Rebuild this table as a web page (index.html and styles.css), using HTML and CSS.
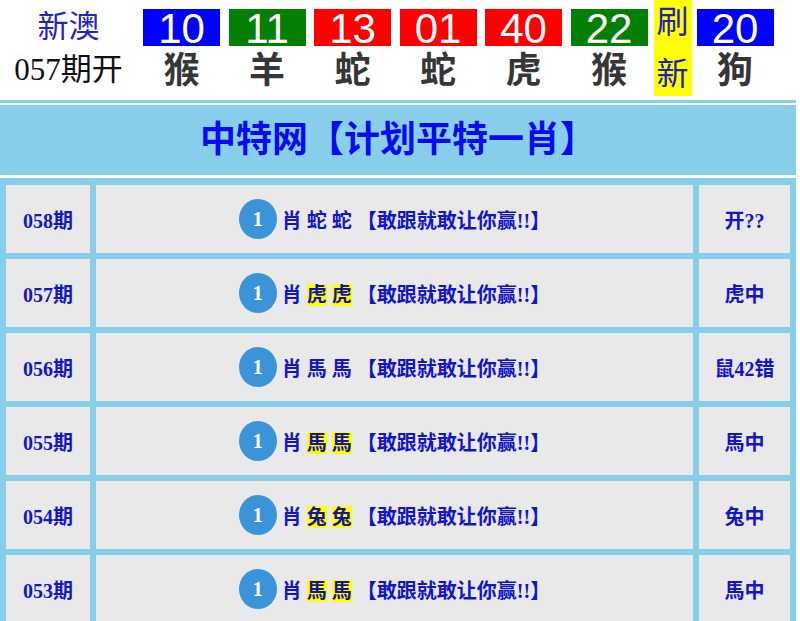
FILE: index.html
```html
<!DOCTYPE html>
<html lang="zh">
<head>
<meta charset="utf-8">
<title>中特网【计划平特一肖】</title>
<link rel="stylesheet" href="styles.css">
</head>
<body>
<div class="page">
  <header class="draw">
    <div class="draw-label">
      <div class="draw-site">新澳</div>
      <div class="draw-issue">057期开</div>
    </div>
    <div class="balls">
      <div class="ball"><div class="num blue">10</div><div class="zodiac">猴</div></div>
      <div class="ball"><div class="num green">11</div><div class="zodiac">羊</div></div>
      <div class="ball"><div class="num red">13</div><div class="zodiac">蛇</div></div>
      <div class="ball"><div class="num red">01</div><div class="zodiac">蛇</div></div>
      <div class="ball"><div class="num red">40</div><div class="zodiac">虎</div></div>
      <div class="ball ball-last"><div class="num green">22</div><div class="zodiac">猴</div></div>
      <div class="refresh"><span>刷</span><span>新</span></div>
      <div class="ball"><div class="num blue">20</div><div class="zodiac">狗</div></div>
    </div>
  </header>

  <div class="board">
    <div class="rule"></div>
    <h1 class="title">中特网【计划平特一肖】</h1>
    <div class="grid">
      <div class="cell period">058期</div>
      <div class="cell pick"><span class="dot">1</span><span class="pick-text">肖 蛇 蛇 【敢跟就敢让你赢!!】</span></div>
      <div class="cell result">开??</div>

      <div class="cell period">057期</div>
      <div class="cell pick"><span class="dot">1</span><span class="pick-text">肖 <mark>虎</mark> <mark>虎</mark> 【敢跟就敢让你赢!!】</span></div>
      <div class="cell result">虎中</div>

      <div class="cell period">056期</div>
      <div class="cell pick"><span class="dot">1</span><span class="pick-text">肖 馬 馬 【敢跟就敢让你赢!!】</span></div>
      <div class="cell result">鼠42错</div>

      <div class="cell period">055期</div>
      <div class="cell pick"><span class="dot">1</span><span class="pick-text">肖 <mark>馬</mark> <mark>馬</mark> 【敢跟就敢让你赢!!】</span></div>
      <div class="cell result">馬中</div>

      <div class="cell period">054期</div>
      <div class="cell pick"><span class="dot">1</span><span class="pick-text">肖 <mark>兔</mark> <mark>兔</mark> 【敢跟就敢让你赢!!】</span></div>
      <div class="cell result">兔中</div>

      <div class="cell period">053期</div>
      <div class="cell pick"><span class="dot">1</span><span class="pick-text">肖 <mark>馬</mark> <mark>馬</mark> 【敢跟就敢让你赢!!】</span></div>
      <div class="cell result">馬中</div>
    </div>
  </div>
</div>
</body>
</html>
```
FILE: styles.css
```css
html, body {
  margin: 0;
  padding: 0;
  background: #ffffff;
}

body {
  font-family: "Liberation Serif", "Noto Sans CJK SC", serif;
  overflow: hidden;
}

.page {
  width: 796px;
}

/* ---------- draw header ---------- */
.draw {
  display: flex;
  height: 100px;
}

.draw-label {
  width: 137px;
  display: flex;
  flex-direction: column;
  align-items: center;
}

.draw-site {
  font-family: "Noto Sans CJK SC", sans-serif;
  font-size: 31px;
  line-height: 48px;
  color: #2323c8;
}

.draw-issue {
  font-size: 31px;
  line-height: 44px;
  color: #111111;
}

.balls {
  display: flex;
  margin-left: 6px;
}

.ball {
  width: 77px;
  margin-right: 8.5px;
  display: flex;
  flex-direction: column;
  align-items: center;
}

.ball-last {
  margin-right: 6px;
}

.num {
  box-sizing: border-box;
  width: 77px;
  height: 37px;
  margin-top: 9px;
  padding-top: 2px;
  font-family: "Liberation Sans", Arial, sans-serif;
  font-size: 42px;
  line-height: 35px;
  text-align: center;
  color: #ffffff;
}

.blue { background: #0000ff; }
.green { background: #038003; }
.red { background: #ff0000; }

.zodiac {
  font-family: "Noto Sans CJK SC", sans-serif;
  font-weight: 700;
  font-size: 36px;
  line-height: 42px;
  color: #363636;
}

.refresh {
  width: 38px;
  height: 96px;
  margin-right: 5px;
  background: #ffff00;
  display: flex;
  flex-direction: column;
  align-items: center;
  gap: 14px;
  font-family: "Noto Sans CJK SC", sans-serif;
  font-size: 32px;
  line-height: 38px;
  color: #2020c0;
}

/* ---------- board ---------- */
.board {
  width: 796px;
}

.rule {
  height: 3px;
  background: #87ceeb;
}

.title {
  box-sizing: border-box;
  margin: 2px 0 0;
  height: 70px;
  padding-bottom: 7px;
  background: #87ceeb;
  font-family: "Noto Sans CJK SC", sans-serif;
  font-weight: 700;
  font-size: 36px;
  line-height: 63px;
  text-align: center;
  color: #0a0af0;
}

.grid {
  margin-top: 3px;
  padding: 7px 6px 6px;
  background: #87ceeb;
  display: grid;
  grid-template-columns: 84px 597px 91px;
  grid-auto-rows: 68px;
  gap: 6px;
}

.cell {
  background: #e9e9e9;
  display: flex;
  align-items: center;
  justify-content: center;
  font-weight: 700;
  font-size: 20px;
  color: #1414c8;
}

.dot {
  width: 38px;
  height: 40px;
  border-radius: 50%;
  background: #3b94d8;
  color: #ffffff;
  font-family: "Liberation Serif", serif;
  font-size: 20px;
  line-height: 40px;
  text-align: center;
  margin-right: 5px;
}

.pick-text {
  white-space: pre;
}

mark {
  background: #ffff00;
  color: #1414a0;
}
```
